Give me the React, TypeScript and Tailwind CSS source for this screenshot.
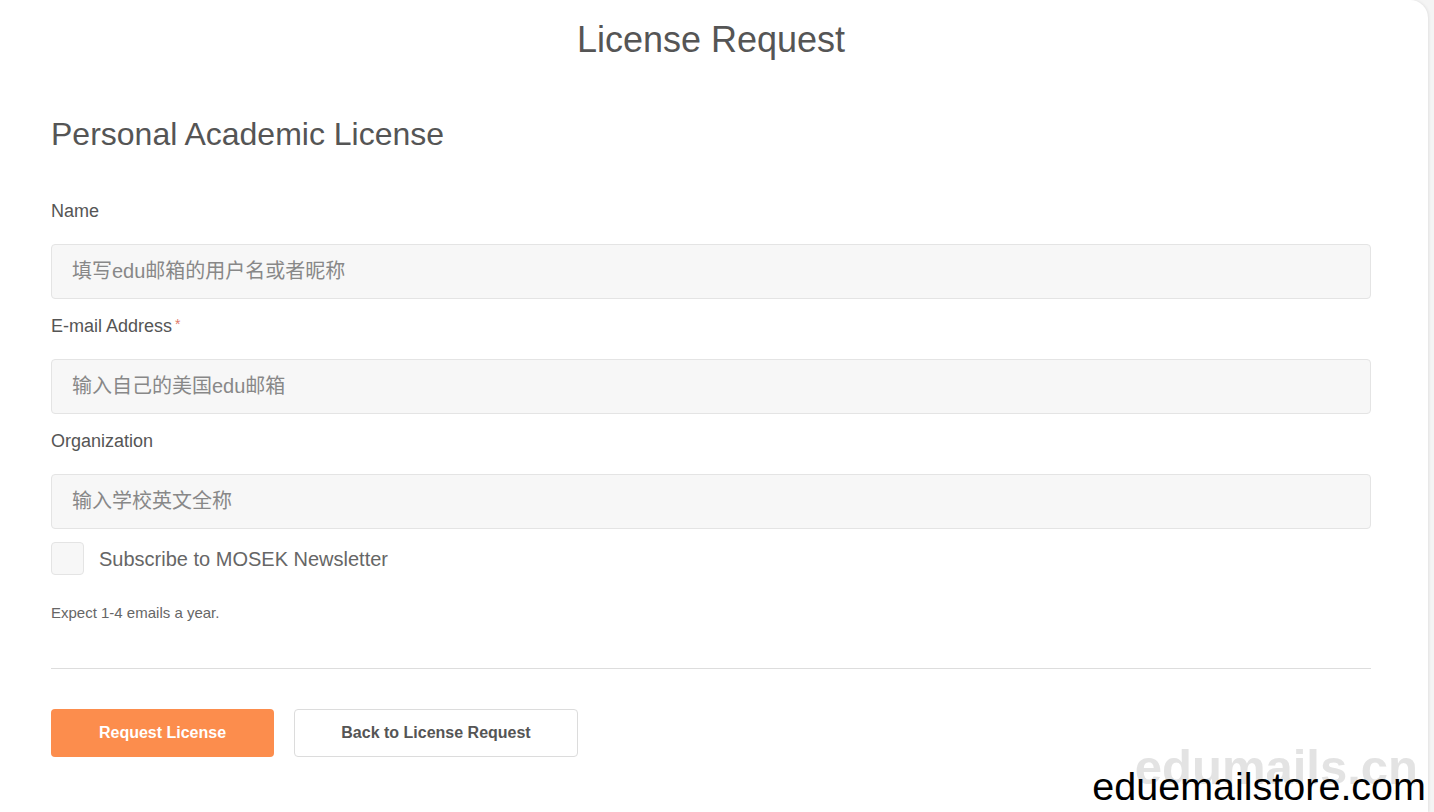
export default function App() {
  const fields = [
    { label: "Name", placeholder: "填写edu邮箱的用户名或者昵称", required: false },
    { label: "E-mail Address", placeholder: "输入自己的美国edu邮箱", required: true },
    { label: "Organization", placeholder: "输入学校英文全称", required: false },
  ];

  return (
    <main
      className="relative min-h-[812px] bg-[#f4f4f4] overflow-hidden"
      style={{ fontFamily: '"Liberation Sans", Arial, "Noto Sans CJK SC", sans-serif' }}
    >
      <div className="w-[1428px] min-h-[812px] bg-white rounded-tr-[18px] shadow-[1px_0_3px_rgba(0,0,0,0.08)] pl-[51px] pr-[57px]">
        <h1 className="text-center text-[36px] leading-none text-[#555] pt-[22px]">
          License Request
        </h1>

        <h2 className="text-[32px] leading-none text-[#555] mt-[60px]">
          Personal Academic License
        </h2>

        <form className="mt-[52px]">
          {fields.map((f, i) => (
            <div key={f.label} className={i === 0 ? "" : "mt-[18px]"}>
              <label className="block text-[18px] leading-none text-[#555]">
                {f.label}
                {f.required && <span className="text-[#e07b6a] text-[14px] align-top ml-[3px]">*</span>}
              </label>
              <input
                type="text"
                placeholder={f.placeholder}
                className="mt-[24px] block w-full h-[55px] rounded-[4px] border border-[#e4e4e4] bg-[#f7f7f7] px-[20px] text-[20px] text-[#555] placeholder:text-[#888] outline-none"
              />
            </div>
          ))}

          <div className="mt-[13px] flex items-center">
            <span className="w-[33px] h-[33px] rounded-[4px] border border-[#e4e4e4] bg-[#f7f7f7]" />
            <span className="ml-[15px] text-[20px] text-[#666]">Subscribe to MOSEK Newsletter</span>
          </div>

          <p className="mt-[30px] text-[15px] leading-none text-[#666]">Expect 1-4 emails a year.</p>

          <hr className="mt-[48px] border-0 border-t border-[#ddd]" />

          <div className="mt-[40px] flex gap-[20px]">
            <button
              type="button"
              className="w-[223px] h-[48px] rounded-[4px] bg-[#fc8d4d] text-white font-bold text-[16px]"
            >
              Request License
            </button>
            <button
              type="button"
              className="w-[284px] h-[48px] rounded-[4px] bg-white border border-[#dcdcdc] text-[#555] font-bold text-[16px]"
            >
              Back to License Request
            </button>
          </div>
        </form>
      </div>

      <div className="absolute right-[16px] top-[743px] text-[49px] font-bold text-[#e3e3e3] leading-none">
        edumails.cn
      </div>
      <div className="absolute right-[8px] bottom-[6px] text-[39.5px] text-black leading-none">
        eduemailstore.com
      </div>
    </main>
  );
}
